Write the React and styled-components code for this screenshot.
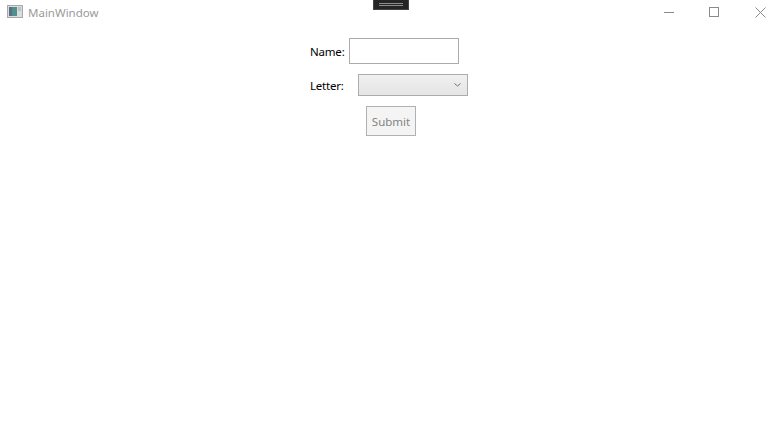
import React from "react";
import styled, { createGlobalStyle } from "styled-components";

const GlobalStyle = createGlobalStyle`
  html, body {
    margin: 0;
    padding: 0;
    background: #ffffff;
  }
  body {
    font-family: "Open Sans", "Noto Sans", sans-serif;
  }
`;

const Page = styled.div`
  position: relative;
  width: 782px;
  height: 437px;
  overflow: hidden;
  background: #ffffff;
`;

const TitleBar = styled.div`
  display: flex;
  align-items: center;
  height: 24px;
  padding-left: 7px;
`;

const AppTitle = styled.span`
  margin-left: 5px;
  font-family: "Noto Sans", "Open Sans", sans-serif;
  font-size: 11.5px;
  color: #9a9a9a;
`;

const WindowButtons = styled.div`
  display: flex;
  margin-left: auto;
`;

const WindowButton = styled.div`
  display: flex;
  align-items: center;
  justify-content: center;
  box-sizing: border-box;
  width: 45px;
  height: 24px;
  padding-left: ${(p) => p.$inset || 0}px;
`;

// the collapsed debug toolbar that WPF puts over the top of the window
const DebugTab = styled.div`
  position: absolute;
  top: 0;
  left: 373px;
  box-sizing: border-box;
  width: 36px;
  height: 10px;
  padding-top: 3px;
  background: #252526;
  border: 1px solid #444444;
  border-top: none;
`;

const DebugLine = styled.div`
  width: 24px;
  height: 1px;
  margin: 0 auto 1px;
  background: #8c8c8c;
`;

const Form = styled.div`
  display: flex;
  flex-direction: column;
  padding-top: 14px;
  padding-left: 310px;
`;

const Row = styled.div`
  display: flex;
  align-items: center;
  margin-bottom: ${(p) => p.$gap}px;
`;

const Label = styled.label`
  width: ${(p) => p.$width}px;
  font-family: "Noto Sans", "Open Sans", sans-serif;
  font-size: 11.5px;
  letter-spacing: -0.2px;
  color: #000000;
`;

const NameInput = styled.input`
  box-sizing: border-box;
  width: 110px;
  height: 26px;
  padding: 0;
  background: #ffffff;
  border: 1px solid #ababab;
  border-radius: 0;
  outline: none;
`;

const Select = styled.div`
  display: flex;
  align-items: center;
  justify-content: flex-end;
  box-sizing: border-box;
  width: 110px;
  height: 22px;
  padding-right: 6px;
  background: linear-gradient(#f0f0f0, #e5e5e5);
  border: 1px solid #acacac;
`;

const SubmitButton = styled.button`
  box-sizing: border-box;
  width: 50px;
  height: 30px;
  margin-left: 56px;
  padding: 0;
  font-family: "Noto Sans", "Open Sans", sans-serif;
  font-size: 11.5px;
  color: #838383;
  background: #f4f4f4;
  border: 1px solid #adb2b5;
  border-radius: 0;
`;

const App = () => {
  return (
    <Page>
      <GlobalStyle />
      <TitleBar>
        <svg width="16" height="16" viewBox="0 0 16 16">
          <rect x="0.5" y="1.5" width="15" height="12" fill="#dcdcdc" stroke="#a8a8a8" />
          <rect x="2" y="3" width="8" height="9" fill="#4f8f8c" />
          <rect x="2" y="3" width="3" height="9" fill="#5c6c86" />
          <rect x="11" y="3" width="3" height="4" fill="#b4c4cc" />
        </svg>
        <AppTitle>MainWindow</AppTitle>
        <WindowButtons>
          <WindowButton>
            <svg width="11" height="11" viewBox="0 0 11 11">
              <path d="M0 5.5H10" stroke="#8a8a8a" fill="none" />
            </svg>
          </WindowButton>
          <WindowButton>
            <svg width="11" height="11" viewBox="0 0 11 11">
              <rect x="0.5" y="0.5" width="9" height="9" stroke="#8a8a8a" fill="none" />
            </svg>
          </WindowButton>
          <WindowButton $inset={2}>
            <svg width="11" height="11" viewBox="0 0 11 11">
              <path d="M0.5 0.5L10.5 10.5M10.5 0.5L0.5 10.5" stroke="#8a8a8a" fill="none" />
            </svg>
          </WindowButton>
        </WindowButtons>
      </TitleBar>
      <DebugTab>
        <DebugLine />
        <DebugLine />
      </DebugTab>
      <Form>
        <Row $gap={10}>
          <Label $width={39}>Name:</Label>
          <NameInput />
        </Row>
        <Row $gap={10}>
          <Label $width={48}>Letter:</Label>
          <Select>
            <svg width="7" height="4" viewBox="0 0 7 4">
              <path d="M0.5 0.5L3.5 3L6.5 0.5" stroke="#707070" fill="none" />
            </svg>
          </Select>
        </Row>
        <SubmitButton>Submit</SubmitButton>
      </Form>
    </Page>
  );
};

export default App;
